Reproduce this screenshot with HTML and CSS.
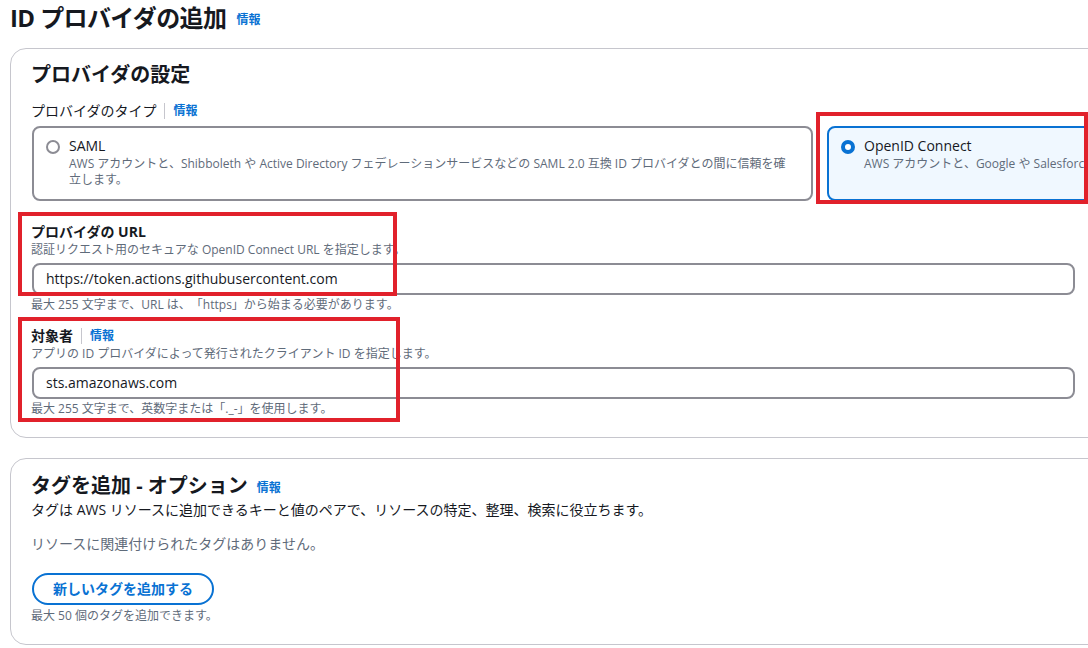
FILE: index.html
```html
<!DOCTYPE html>
<html lang="ja">
<head>
<meta charset="utf-8">
<title>ID プロバイダの追加</title>
<link rel="stylesheet" href="styles.css">
</head>
<body>
<div class="page">
  <div class="title-row">
    <h1 class="title">ID プロバイダの追加</h1>
    <a class="info">情報</a>
  </div>

  <section class="card card-settings">
    <h2 class="card-title">プロバイダの設定</h2>
    <div class="label-row">
      <span class="label-plain">プロバイダのタイプ</span>
      <span class="sep"></span>
      <a class="info">情報</a>
    </div>
    <div class="tiles">
      <div class="tile">
        <span class="radio"></span>
        <div class="tile-text">
          <div class="tile-name">SAML</div>
          <div class="tile-desc">AWS アカウントと、Shibboleth や Active Directory フェデレーションサービスなどの SAML 2.0 互換 ID プロバイダとの間に信頼を確立します。</div>
        </div>
      </div>
      <div class="tile tile-selected">
        <span class="radio radio-on"></span>
        <div class="tile-text">
          <div class="tile-name">OpenID Connect</div>
          <div class="tile-desc">AWS アカウントと、Google や Salesforce などの OpenID Connect 互換 ID プロバイダとの間に信頼を確立します。</div>
        </div>
      </div>
    </div>

    <div class="field field-url">
      <div class="field-label">プロバイダの URL</div>
      <div class="field-desc">認証リクエスト用のセキュアな OpenID Connect URL を指定します。</div>
      <div class="input">https://token.actions.githubusercontent.com</div>
      <div class="field-hint">最大 255 文字まで、URL は、「https」から始まる必要があります。</div>
    </div>

    <div class="field field-aud">
      <div class="label-row field-label-row">
        <span class="field-label">対象者</span>
        <span class="sep"></span>
        <a class="info">情報</a>
      </div>
      <div class="field-desc">アプリの ID プロバイダによって発行されたクライアント ID を指定します。</div>
      <div class="input">sts.amazonaws.com</div>
      <div class="field-hint">最大 255 文字まで、英数字または「._-」を使用します。</div>
    </div>
  </section>

  <section class="card card-tags">
    <div class="title-row tags-title-row">
      <h2 class="card-title">タグを追加 - オプション</h2>
      <a class="info">情報</a>
    </div>
    <p class="tags-desc">タグは AWS リソースに追加できるキーと値のペアで、リソースの特定、整理、検索に役立ちます。</p>
    <p class="tags-empty">リソースに関連付けられたタグはありません。</p>
    <button class="btn">新しいタグを追加する</button>
    <div class="field-hint btn-hint">最大 50 個のタグを追加できます。</div>
  </section>

  <div class="mark mark-oidc"></div>
  <div class="mark mark-url"></div>
  <div class="mark mark-aud"></div>
</div>
</body>
</html>
```

FILE: styles.css
```css
* { box-sizing: border-box; }

html, body {
  margin: 0;
  padding: 0;
  background: #ffffff;
  overflow: hidden;
}

body {
  font-family: "Open Sans", "Noto Sans CJK JP", sans-serif;
  color: #16191f;
  font-size: 14px;
  text-spacing-trim: space-all;
}

.page {
  position: relative;
  width: 1620px;
  padding: 4px 0 0 10px;
}

.title-row {
  display: flex;
  align-items: center;
  gap: 10px;
  height: 28px;
}

.title {
  margin: 0;
  font-size: 24px;
  line-height: 28px;
  font-weight: 700;
  letter-spacing: -0.6px;
}

.info {
  color: #0972d3;
  font-size: 12px;
  font-weight: 700;
  line-height: 16px;
  padding-top: 4px;
}

.card {
  border: 1px solid #c6c6cd;
  border-radius: 16px;
  padding: 12px 20px 20px 20px;
}

.card-settings {
  margin-top: 16px;
  height: 390px;
}

.card-title {
  margin: 0;
  font-size: 20px;
  line-height: 28px;
  font-weight: 700;
}

.label-row {
  display: flex;
  align-items: center;
  gap: 8px;
  margin-top: 12px;
  height: 20px;
}

.label-plain {
  font-size: 14px;
  line-height: 20px;
}

.label-row .info {
  padding-top: 0;
  font-size: 12px;
}

.sep {
  width: 1px;
  height: 16px;
  background: #c6c6cd;
}

.tiles {
  display: grid;
  grid-template-columns: 781px 781px;
  gap: 14px;
  margin-top: 5px;
  margin-left: 1px;
}

.tile {
  display: flex;
  gap: 9px;
  height: 75px;
  border: 2px solid #8c8c94;
  border-radius: 8px;
  padding: 8px 16px 8px 12px;
}

.tile-selected {
  border-color: #0972d3;
  background: #f0f8ff;
}

.radio {
  flex: none;
  width: 14px;
  height: 14px;
  margin-top: 4px;
  border: 2px solid #8c8c94;
  border-radius: 50%;
  background: #fff;
}

.radio-on {
  border: 4px solid #0972d3;
}

.tile-name {
  font-size: 14px;
  line-height: 20px;
}

.tile-desc {
  font-size: 12px;
  line-height: 16px;
  color: #5f6b7a;
}

.field {
  margin-top: 21px;
}

.field-aud {
  margin-top: 13px;
}

.field-label {
  font-size: 14px;
  line-height: 20px;
  font-weight: 700;
}

.field-label-row {
  margin-top: 0;
}

.field-desc {
  font-size: 12px;
  line-height: 16px;
  color: #5f6b7a;
}

.input {
  width: 1043px;
  height: 32px;
  margin-top: 5px;
  margin-left: 1px;
  border: 2px solid #8c8c94;
  border-radius: 8px;
  padding: 0 12px;
  font-size: 14px;
  line-height: 28px;
  color: #16191f;
}

.field-hint {
  margin-top: 2px;
  font-size: 12px;
  line-height: 16px;
  color: #5f6b7a;
}

.card-tags {
  margin-top: 20px;
  padding-top: 13px;
}

.tags-title-row {
  gap: 9px;
}

.tags-desc {
  margin: 0;
  font-size: 14px;
  line-height: 20px;
}

.tags-empty {
  margin: 14px 0 0 0;
  font-size: 14px;
  line-height: 20px;
  color: #5f6b7a;
}

.btn {
  display: block;
  margin-top: 19px;
  margin-left: 1px;
  height: 32px;
  padding: 0 19px;
  border: 2px solid #0972d3;
  border-radius: 20px;
  background: #fff;
  color: #0972d3;
  font-family: "Open Sans", "Noto Sans CJK JP", sans-serif;
  font-size: 14px;
  font-weight: 700;
  line-height: 28px;
}

.btn-hint {
  margin-top: 3px;
}

.mark {
  position: absolute;
  border: 4px solid #e1212b;
  pointer-events: none;
}

.mark-oidc {
  left: 816px;
  top: 112px;
  width: 272px;
  height: 92px;
}

.mark-url {
  left: 18px;
  top: 212px;
  width: 379px;
  height: 84px;
}

.mark-aud {
  left: 18px;
  top: 317px;
  width: 382px;
  height: 105px;
}
```
